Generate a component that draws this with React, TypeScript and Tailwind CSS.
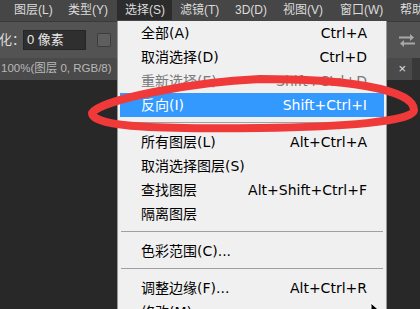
import React from 'react'

const barItems = [
  { label: '图层(L)', w: 'w-[54px]', active: false },
  { label: '类型(Y)', w: 'w-[57px]', active: false },
  { label: '选择(S)', w: 'w-[55px]', active: true },
  { label: '滤镜(T)', w: 'w-[55px]', active: false },
  { label: '3D(D)', w: 'w-[48px]', active: false },
  { label: '视图(V)', w: 'w-[57px]', active: false },
  { label: '窗口(W)', w: 'w-[60px]', active: false },
  { label: '帮助(H)', w: 'w-[60px]', active: false },
]

type Entry =
  | { sep: true }
  | { sep?: false; label: string; keys?: string; disabled?: boolean; hi?: boolean; sub?: boolean }

const entries: Entry[] = [
  { label: '全部(A)', keys: 'Ctrl+A' },
  { label: '取消选择(D)', keys: 'Ctrl+D' },
  { label: '重新选择(E)', keys: 'Shift+Ctrl+D', disabled: true },
  { label: '反向(I)', keys: 'Shift+Ctrl+I', hi: true },
  { sep: true },
  { label: '所有图层(L)', keys: 'Alt+Ctrl+A' },
  { label: '取消选择图层(S)' },
  { label: '查找图层', keys: 'Alt+Shift+Ctrl+F' },
  { label: '隔离图层' },
  { sep: true },
  { label: '色彩范围(C)...' },
  { sep: true },
  { label: '调整边缘(F)...', keys: 'Alt+Ctrl+R' },
  { label: '修改(M)', sub: true },
]

function SelectMenu() {
  return (
    <div className="absolute left-[117px] top-[21px] w-[270px] bg-[#f0f0f0] border border-t-0 border-[#979797] px-[2px] font-['DejaVu_Sans','Noto_Sans_CJK_SC',sans-serif] text-[14px]">
      {entries.map((e, i) =>
        e.sep ? (
          <div key={i} className="h-[13px] pt-[5px] px-[1px]">
            <div className="h-px bg-[#a0a0a0]" />
          </div>
        ) : (
          <div
            key={i}
            className={
              'h-[24px] flex items-center pl-[21px] pr-[17px] whitespace-nowrap ' +
              (e.hi ? 'bg-[#3399ff] text-white' : e.disabled ? 'text-[#7a7a7a]' : 'text-black')
            }
          >
            <span>{e.label}</span>
            {e.keys && <span className="ml-auto">{e.keys}</span>}
          </div>
        )
      )}
    </div>
  )
}

export default function App() {
  return (
    <div className="relative w-[420px] h-[309px] overflow-hidden bg-[#282828] flex flex-col">
      {/* menu bar */}
      <div className="h-[21px] bg-[#464646] flex items-start pl-[6px] font-['Liberation_Sans','Noto_Sans_CJK_SC',sans-serif] text-[12px] text-[#dcdcdc] whitespace-nowrap">
        {barItems.map((b) => (
          <div
            key={b.label}
            className={b.w + ' shrink-0 h-[20px] pl-[8px] flex items-center ' + (b.active ? 'bg-[#2c2c2c]' : '')}
          >
            {b.label}
          </div>
        ))}
      </div>

      {/* options bar */}
      <div className="h-[37px] bg-[#535353] border-t border-[#3a3a3a] flex items-center font-['Liberation_Sans','Noto_Sans_CJK_SC',sans-serif] text-[13px] text-[#dedede]">
        <span className="ml-[-1px] w-[24px]">化：</span>
        <div className="w-[63px] h-[20px] bg-[#2f2f2f] border border-[#262626] flex items-center pl-[3px] text-[#e8e8e8]">
          0 像素
        </div>
        <div className="ml-[11px] w-[14px] h-[14px] rounded-[2px] bg-[#5e5e5e] border border-[#3c3c3c]" />
        <div className="ml-auto mr-[29px] w-[4px] h-[20px] bg-[#3a3a3a]" />
        <svg width="18" height="14" viewBox="0 0 18 14" className="mr-[4px]">
          <path d="M1 4.5h12" stroke="#a8a8a8" strokeWidth="2" />
          <path d="M12 1l4 3.5-4 3.5z" fill="#a8a8a8" />
          <path d="M5 10.5h12" stroke="#a8a8a8" strokeWidth="2" />
          <path d="M6 7l-4 3.5 4 3.5z" fill="#a8a8a8" />
        </svg>
      </div>

      {/* document tab row */}
      <div className="h-[22px] bg-[#393939] flex font-['Liberation_Sans','Noto_Sans_CJK_SC',sans-serif] text-[11.5px] text-[#b8b8b8] whitespace-nowrap">
        <div className="w-[412px] bg-[#4a4a4a] flex items-center pl-[1px]">
          <span>100%(图层 0, RGB/8)</span>
          <span className="ml-auto mr-[6px] text-[#e0e0e0] text-[13px]">×</span>
        </div>
      </div>

      {/* canvas area */}
      <div className="flex-1 bg-[#282828]" />

      <SelectMenu />

      {/* pointer */}
      <svg className="absolute left-[370px] top-[302px]" width="12" height="18" viewBox="0 0 12 18">
        <path d="M1 1v14l3.5-3.5 2.5 5.5 2-1-2.5-5.5h5z" fill="#000" stroke="#fff" strokeWidth="1" />
      </svg>

      {/* red annotation */}
      <svg className="absolute inset-0 pointer-events-none" width="420" height="309" viewBox="0 0 420 309">
        <path
          d="M92 113 C100 100 190 82 260 79 C340 79 414 88 414 110 C414 122 340 127 260 128 C170 129 92 128 92 113 Z"
          fill="none"
          stroke="#f03a3a"
          strokeWidth="8"
          strokeLinejoin="round"
        />
      </svg>
    </div>
  )
}
